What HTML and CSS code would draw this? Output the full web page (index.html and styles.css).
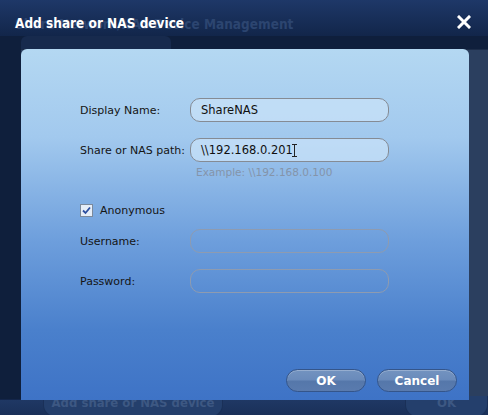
FILE: index.html
```html
<!DOCTYPE html>
<html>
<head>
<meta charset="utf-8">
<link rel="stylesheet" href="styles.css">
</head>
<body>
<div class="app">
  <div class="app-header"><span class="app-title">Share Network/NAS Device Management</span></div>
  <div class="app-main">
    <div class="app-side"></div>
    <div class="app-body">
      <div class="app-tab"></div>
      <div class="app-card"></div>
    </div>
  </div>
  <div class="app-footer">
    <span class="app-btn app-btn-add">Add share or NAS device</span>
    <span class="app-btn app-btn-ok">OK</span>
  </div>
</div>

<div class="dialog">
  <div class="dialog-title">
    <span class="title-text">Add share or NAS device</span>
    <span class="close">
      <svg width="14" height="14" viewBox="0 0 14 14"><path d="M2 2 L12 12 M12 2 L2 12" stroke="#fff" stroke-width="3" stroke-linecap="square"/></svg>
    </span>
  </div>
  <div class="panel">
    <div class="form">
      <div class="row">
        <span class="label">Display Name:</span>
        <span class="field">ShareNAS</span>
      </div>
      <div class="row row-path">
        <span class="label">Share or NAS path:</span>
        <span class="field">\\192.168.0.201<span class="caret"></span></span>
      </div>
      <div class="example">Example: \\192.168.0.100</div>
      <div class="check-row">
        <span class="checkbox">
          <svg width="9" height="9" viewBox="0 0 9 9"><path d="M1 4.5 L3.5 7 L8 1.5" stroke="#2c4fa0" stroke-width="1.8" fill="none"/></svg>
        </span>
        <span class="check-label">Anonymous</span>
      </div>
      <div class="row row-user">
        <span class="label">Username:</span>
        <span class="field field-off"></span>
      </div>
      <div class="row row-pass">
        <span class="label">Password:</span>
        <span class="field field-off"></span>
      </div>
    </div>
    <div class="buttons">
      <span class="btn">OK</span>
      <span class="btn">Cancel</span>
    </div>
  </div>
</div>
</body>
</html>
```
FILE: styles.css
```css
html, body {
  margin: 0;
  padding: 0;
}
body {
  width: 488px;
  height: 415px;
  overflow: hidden;
  position: relative;
  background: #0f1f3c;
  font-family: "DejaVu Sans", Tahoma, sans-serif;
}
.app {
  display: flex;
  flex-direction: column;
  height: 415px;
}
.app-header {
  height: 36px;
  background: linear-gradient(#1e3868, #12264a);
  display: flex;
  align-items: center;
  padding-left: 15px;
}
.app-title {
  font-family: "DejaVu Sans Condensed", "DejaVu Sans", sans-serif;
  font-weight: bold;
  font-size: 13.5px;
  color: #2c4570;
  padding-top: 12px;
}
.app-main {
  flex: 1;
  display: flex;
}
.app-side {
  width: 21px;
  background: #0f1f3c;
}
.app-body {
  flex: 1;
  display: flex;
  flex-direction: column;
}
.app-tab {
  height: 13px;
  width: 150px;
  background: #172a4d;
  border-radius: 6px 6px 0 0;
}
.app-card {
  flex: 1;
  background: #2b3f5f;
  border-top: 1px solid #1c2c48;
}
.app-footer {
  height: 15px;
  background: linear-gradient(#1f3864, #1a3059);
  border-top: 1px solid #13254a;
  display: flex;
  align-items: flex-start;
}
.app-btn {
  font-family: "DejaVu Sans Condensed", "DejaVu Sans", sans-serif;
  font-weight: bold;
  font-size: 13px;
  color: #3d5883;
  height: 20px;
  line-height: 14px;
  border-radius: 0 0 12px 12px;
  background: #243f6c;
  border: 1px solid #1a3058;
  border-top: none;
  text-align: center;
}
.app-btn-add {
  margin-left: 43px;
  width: 180px;
  margin-top: -4px;
}
.app-btn-ok {
  margin-left: 182px;
  width: 82px;
  margin-top: -4px;
}

.dialog {
  position: absolute;
  left: 0;
  top: 0;
  width: 488px;
  height: 400px;
  display: flex;
  flex-direction: column;
}
.dialog-title {
  height: 49px;
  display: flex;
  align-items: flex-start;
  justify-content: space-between;
  padding: 0 17px 0 15px;
  box-sizing: border-box;
}
.title-text {
  font-family: "DejaVu Sans Condensed", "DejaVu Sans", sans-serif;
  font-weight: bold;
  font-size: 13.5px;
  color: #ffffff;
  margin-top: 15px;
}
.close {
  margin-top: 15px;
  display: flex;
}
.panel {
  margin-left: 21px;
  width: 448px;
  flex: 1;
  border-radius: 6px 6px 0 0;
  background: linear-gradient(#b4d8f2 0%, #a2c9ee 25%, #6d9edc 55%, #4a80cc 80%, #3e73c6 100%);
  display: flex;
  flex-direction: column;
  justify-content: space-between;
  padding: 49px 12px 8px 59px;
  box-sizing: border-box;
}
.form {
  display: flex;
  flex-direction: column;
}
.row {
  display: flex;
  align-items: center;
  height: 24px;
}
.row-path {
  margin-top: 16px;
}
.row-user {
  margin-top: 12px;
}
.row-pass {
  margin-top: 16px;
}
.label {
  width: 110px;
  font-size: 11px;
  color: #151515;
  padding-top: 1px;
}
.field {
  width: 199px;
  height: 24px;
  box-sizing: border-box;
  border: 1px solid #858b94;
  border-radius: 10px;
  background: rgba(200, 225, 248, 0.75);
  font-size: 11.5px;
  color: #101010;
  padding-left: 10px;
  display: flex;
  align-items: center;
}
.field-off {
  background: transparent;
  border-color: #8e9bb0;
}
.caret {
  display: inline-block;
  width: 1px;
  height: 13px;
  background: #222;
  margin-left: 1px;
  position: relative;
}
.caret::before, .caret::after {
  content: "";
  position: absolute;
  left: -2px;
  width: 5px;
  height: 1px;
  background: #222;
}
.caret::before { top: 0; }
.caret::after { bottom: 0; }
.example {
  margin-left: 116px;
  margin-top: 4px;
  font-size: 10.5px;
  color: #8494aa;
  height: 14px;
}
.check-row {
  display: flex;
  align-items: center;
  margin-top: 23px;
  height: 14px;
}
.checkbox {
  width: 11px;
  height: 11px;
  border: 1px solid #7c8a9c;
  background: #e6eef8;
  display: flex;
  align-items: center;
  justify-content: center;
  margin-right: 7px;
}
.check-label {
  font-size: 11px;
  color: #151515;
}
.buttons {
  display: flex;
  justify-content: flex-end;
  gap: 11px;
}
.btn {
  width: 80px;
  height: 23px;
  box-sizing: border-box;
  border-radius: 12px;
  border: 1px solid #34558a;
  background: linear-gradient(#7393c0 0%, #6a8bbb 45%, #5577aa 55%, #5a7bae 100%);
  color: #ffffff;
  font-weight: bold;
  font-size: 12px;
  display: flex;
  align-items: center;
  justify-content: center;
  box-shadow: inset 0 1px 0 rgba(255,255,255,0.25);
}
```
